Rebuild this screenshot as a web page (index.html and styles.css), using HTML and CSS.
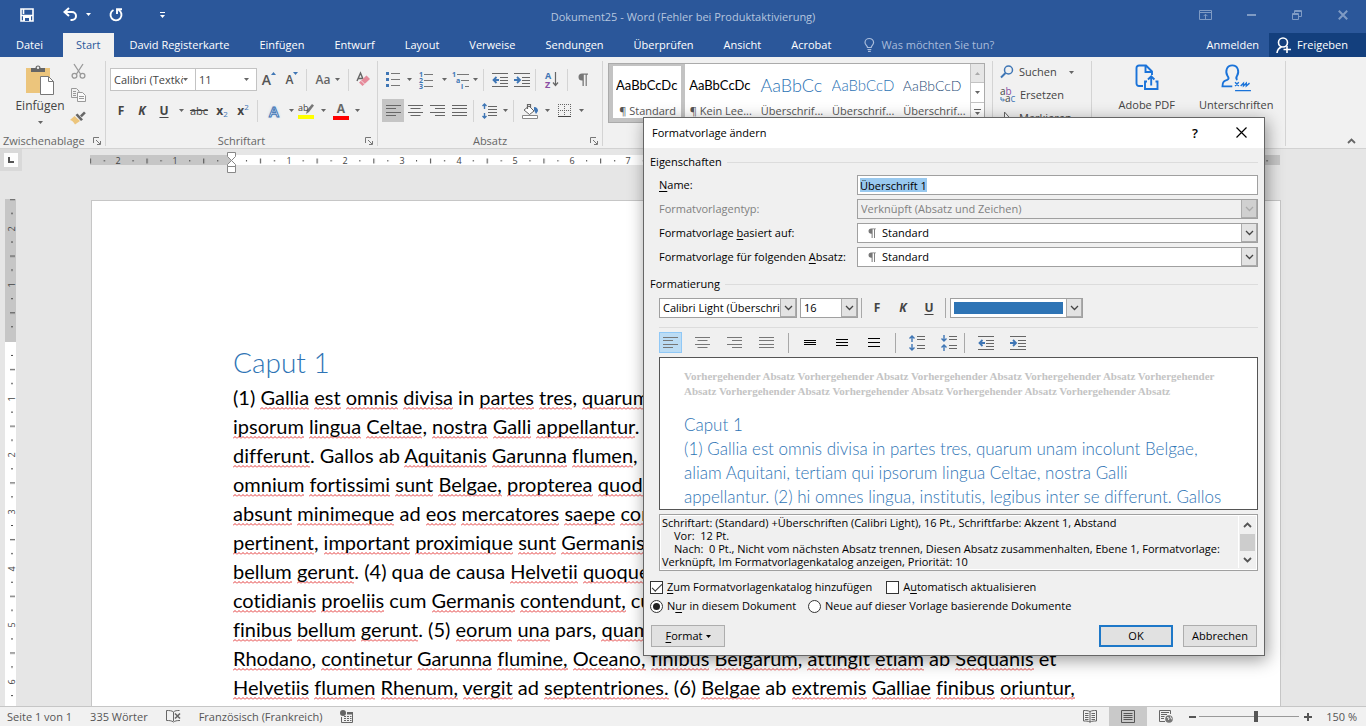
FILE: index.html
```html
<!DOCTYPE html>
<html lang="de">
<head>
<meta charset="utf-8">
<title>Dokument25 - Word</title>
<link rel="stylesheet" href="styles.css">
</head>
<body>
<svg class="defs" aria-hidden="true">
  <symbol id="caret" viewBox="0 0 5 3"><path d="M0 0h5L2.500 3z" fill="currentColor"/></symbol>
  <symbol id="chev" viewBox="0 0 9 6"><path d="M1 1l3.500 3.500L8 1" fill="none" stroke="currentColor" stroke-width="1.300"/></symbol>
  <symbol id="launch" viewBox="0 0 8 8"><path d="M.5 6V.5H6M3 3l4 4M7.500 4v3.500H4" fill="none" stroke="#777"/></symbol>
  <symbol id="left" viewBox="0 0 15 11"><path d="M0 .5h15M0 3.500h10M0 7.500h15M0 10.500h10" stroke="currentColor"/></symbol>
  <symbol id="center" viewBox="0 0 15 11"><path d="M0 .5h15M2.500 3.500h10M0 7.500h15M2.500 10.500h10" stroke="currentColor"/></symbol>
  <symbol id="right" viewBox="0 0 15 11"><path d="M0 .5h15M5 3.500h10M0 7.500h15M5 10.500h10" stroke="currentColor"/></symbol>
  <symbol id="just" viewBox="0 0 15 11"><path d="M0 .5h15M0 3.500h15M0 7.500h15M0 10.500h15" stroke="currentColor"/></symbol>
  <symbol id="outdent" viewBox="0 0 17 14"><path d="M0 .5h16M8 4.500h8M8 7.500h8M8 10.500h8M0 13.500h16" stroke="#666"/><path d="M7 7H2M4.500 4L1.500 7l3 3" fill="none" stroke="#3f76b5" stroke-width="1.800"/></symbol>
  <symbol id="indent" viewBox="0 0 17 14"><path d="M0 .5h16M8 4.500h8M8 7.500h8M8 10.500h8M0 13.500h16" stroke="#666"/><path d="M0 7h5.500M3 4l3 3-3 3" fill="none" stroke="#3f76b5" stroke-width="1.800"/></symbol>
  <symbol id="pilcrow" viewBox="0 0 10 13"><path d="M4.500 7.500H4A3.500 3.500 0 0 1 4 .5h6v1.200H8.800V13H7.600V1.700H5.800V13H4.500z" fill="currentColor"/></symbol>
</svg>

<div class="app">
  <header class="titlebar">
    <div class="quick">
      <button class="q-save" aria-label="Speichern"><svg width="14" height="14" viewBox="0 0 14 14"><path d="M1 1h12v12H1zM1 7.500h12M3.500 1v5" fill="none" stroke="#fff" stroke-width="1.600"/><path d="M3 8h8v5H3z" fill="#fff"/><path d="M5 10h4v3H5z" fill="#2b579a"/></svg></button>
      <button class="q-undo" aria-label="Rückgängig"><svg width="15" height="13" viewBox="0 0 15 13"><path d="M6 0L1.500 4 6 8M2 4h7a4 4 0 0 1 0 8H7.500" fill="none" stroke="#fff" stroke-width="2"/></svg></button>
      <button class="q-caret" aria-label="Rückgängig-Liste"><svg width="5" height="3"><use href="#caret"/></svg></button>
      <button class="q-redo" aria-label="Wiederholen"><svg width="14" height="14" viewBox="0 0 14 14"><path d="M4.500 2A5.500 5.500 0 1 0 9.500 2M8 6V1.200h5" fill="none" stroke="#fff" stroke-width="1.900"/></svg></button>
      <button class="q-more" aria-label="Anpassen"><svg width="5" height="6" viewBox="0 0 5 6"><path d="M0 .5h5" stroke="#fff"/><path d="M0 3h5L2.500 6z" fill="#fff"/></svg></button>
    </div>
    <div class="apptitle">Dokument25 - Word (Fehler bei Produktaktivierung)</div>
    <div class="winbtns">
      <button aria-label="Menüband-Anzeigeoptionen"><svg width="13" height="10" viewBox="0 0 13 10"><path d="M.5.5h12v9H.5zM.5 2.500h12M6.500 9V4.500M4.500 6.200l2-2 2 2" fill="none" stroke="currentColor"/></svg></button>
      <button aria-label="Minimieren"><svg width="9" height="2" viewBox="0 0 9 2"><path d="M0 1h9" stroke="currentColor" stroke-width="2"/></svg></button>
      <button aria-label="Wiederherstellen"><svg width="10" height="10" viewBox="0 0 10 10"><path d="M.5 3.500h6v6h-6zM.5 4.500h6M2.500 3V.5h7v6H7M2.500 1.500h7" fill="none" stroke="currentColor"/></svg></button>
      <button aria-label="Schließen"><svg width="10" height="10" viewBox="0 0 10 10"><path d="M.8.8l8.400 8.400M9.200.8L.8 9.200" stroke="currentColor" stroke-width="2"/></svg></button>
    </div>
  </header>

  <nav class="tabs">
    <button class="tab">Datei</button><button class="tab active">Start</button><button class="tab">David Registerkarte</button><button class="tab">Einfügen</button><button class="tab">Entwurf</button><button class="tab">Layout</button><button class="tab">Verweise</button><button class="tab">Sendungen</button><button class="tab">Überprüfen</button><button class="tab">Ansicht</button><button class="tab">Acrobat</button>
    <button class="tab tell"><svg width="11" height="14" viewBox="0 0 11 14"><path d="M3.500 9.500C3.500 7.500 1 7 1 4.500a4.300 4 0 0 1 8.600 0C9.600 7 7.200 7.500 7.200 9.500zM3.500 11.500h3.800M4 13.400h2.800" fill="none" stroke="currentColor" stroke-width="1.200"/></svg>Was möchten Sie tun?</button>
    <button class="login">Anmelden</button>
    <button class="share"><svg width="16" height="17" viewBox="0 0 16 17"><circle cx="7" cy="5.500" r="4.500" fill="none" stroke="#fff" stroke-width="1.600"/><path d="M1 16c.3-3 2-5 4.500-6M11 9v7M7.500 12.500h7.500" fill="none" stroke="#fff" stroke-width="1.600"/></svg>Freigeben</button>
  </nav>

  <section class="ribbon">
    <div class="group g-clip">
      <div class="gbody clip">
        <button class="big"><svg width="28" height="30" viewBox="0 0 28 30"><path d="M0 3h24v25H0z" fill="#ecc57c"/><path d="M5 7V3h4.500a2.500 2.500 0 0 1 5 0H19v4z" fill="#666"/><circle cx="12" cy="2.800" r="1.200" fill="#eee"/><path d="M14.500 11.500h8l5 5v13h-13z" fill="#fff" stroke="#777"/><path d="M22.500 11.500v5h5" fill="none" stroke="#777"/></svg><span>Einfügen</span><svg class="dn" width="5" height="3"><use href="#caret"/></svg></button>
        <div class="clipcol">
          <button aria-label="Ausschneiden"><svg width="15" height="15" viewBox="0 0 15 15"><path d="M3 0l6.500 10M12 0L5.500 10" stroke="#999" stroke-width="1.300"/><circle cx="3.500" cy="11.800" r="2.400" fill="none" stroke="#999" stroke-width="1.300"/><circle cx="11.500" cy="11.800" r="2.400" fill="none" stroke="#999" stroke-width="1.300"/></svg></button>
          <button aria-label="Kopieren"><svg width="15" height="14" viewBox="0 0 15 14"><path d="M.5.500h5l2.500 2.500v6.500H.5z" fill="#f1f1f1" stroke="#999"/><path d="M6.500 4.500h5l3 3v6h-8z" fill="#fafafa" stroke="#999"/><path d="M2 3.500h3M2 5.500h3M2 7.500h3M8 8.500h5M8 10.500h5" stroke="#999"/></svg></button>
          <button aria-label="Format übertragen"><svg width="16" height="14" viewBox="0 0 16 14"><path d="M10 4.500L14 .5l1.800 1.800-4 4z" fill="#666"/><path d="M5.500 4l2-1.500 5.500 6-2 1.500z" fill="#666"/><path d="M4.500 5L0 9c2 .5 3 1.500 5 4.500l5-3.500z" fill="#ecc57c"/></svg></button>
        </div>
      </div>
      <div class="glabel">Zwischenablage<button aria-label="Dialog Zwischenablage"><svg width="8" height="8"><use href="#launch"/></svg></button></div>
    </div>

    <div class="group g-font">
      <div class="gbody rows">
        <div class="row">
          <div class="rcombo c-name"><select aria-label="Schriftart"><option>Calibri (Textkörper)</option></select><svg width="5" height="3"><use href="#caret"/></svg></div>
          <div class="rcombo c-size"><select aria-label="Schriftgrad"><option>11</option></select><svg width="5" height="3"><use href="#caret"/></svg></div>
          <button class="b24" aria-label="Schrift vergrößern"><span class="gA">A</span><svg class="tri" width="5" height="3" viewBox="0 0 5 3"><path d="M0 3h5L2.500 0z" fill="#3f76b5"/></svg></button>
          <button class="b22" aria-label="Schrift verkleinern"><span class="gA sm">A</span><svg class="tri" width="5" height="3" viewBox="0 0 5 3"><path d="M0 0h5L2.500 3z" fill="#3f76b5"/></svg></button>
          <i class="sep"></i>
          <button class="b34 aa">Aa <svg width="5" height="3"><use href="#caret"/></svg></button>
          <i class="sep"></i>
          <button class="b20" aria-label="Formatierung löschen"><svg width="15" height="15" viewBox="0 0 15 15"><path d="M1 9L4.500 1 7 7M2 6.500h4" fill="none" stroke="#666" stroke-width="1.400"/><path d="M3 10.500l7.500-7 3.500 3.500-7.500 7z" fill="#e58a9a"/><path d="M5 8.500l3.600 3.600" stroke="#f6dfe3"/></svg></button>
        </div>
        <div class="row">
          <button class="b22 ch"><b>F</b></button><button class="b20 ch"><b><em>K</em></b></button><button class="b24 ch"><b class="ul">U</b></button><button class="b10" aria-label="Unterstreichungsart"><svg width="5" height="3"><use href="#caret"/></svg></button>
          <button class="b26 strike">abc</button><button class="b20 ch x"><b>x</b><span class="lo">2</span></button><button class="b22 ch x"><b>x</b><span class="hi">2</span></button><i class="sep"></i>
          <button class="b24 fx">A</button><button class="b10" aria-label="Texteffekte"><svg width="5" height="3"><use href="#caret"/></svg></button>
          <button class="b20" aria-label="Texthervorhebung"><svg width="16" height="17" viewBox="0 0 16 17"><path d="M0 13h16v4H0z" fill="#ff0"/><path d="M9 8l5-6 2 1.500-5 6.500-3 2z" fill="#777"/><text x="0" y="9" class="hl">ab</text></svg></button><button class="b14" aria-label="Hervorhebungsfarbe"><svg width="5" height="3"><use href="#caret"/></svg></button>
          <button class="b22 fc"><b>A</b></button><button class="b10" aria-label="Schriftfarbe"><svg width="5" height="3"><use href="#caret"/></svg></button>
        </div>
      </div>
      <div class="glabel">Schriftart<button aria-label="Dialog Schriftart"><svg width="8" height="8"><use href="#launch"/></svg></button></div>
    </div>

    <div class="group g-para">
      <div class="gbody rows">
        <div class="row">
          <button class="b22" aria-label="Aufzählung"><svg width="14" height="15" viewBox="0 0 14 15"><path d="M5 1.500h9M5 7.500h9M5 13.500h9" stroke="#777"/><path d="M0 0h3v3H0zM0 6h3v3H0zM0 12h3v3H0z" fill="#3f76b5"/></svg></button><button class="b10" aria-label="Aufzählungszeichen"><svg width="5" height="3"><use href="#caret"/></svg></button>
          <button class="b24" aria-label="Nummerierung"><svg width="14" height="16" viewBox="0 0 14 16"><path d="M5 2.500h9M5 8.500h9M5 14.500h9" stroke="#777"/><g class="num"><text x="0" y="5">1</text><text x="0" y="11">2</text><text x="0" y="17">3</text></g></svg></button><button class="b12" aria-label="Nummerierungsformat"><svg width="5" height="3"><use href="#caret"/></svg></button>
          <button class="b20" aria-label="Liste mit mehreren Ebenen"><svg width="17" height="16" viewBox="0 0 17 16"><path d="M5 2.500h12M9 8.500h8M13 14.500h4" stroke="#777"/><g class="num"><text x="0" y="5">1</text><text x="4" y="11">a</text><text x="9" y="17">i</text></g></svg></button><button class="b10" aria-label="Ebenenformat"><svg width="5" height="3"><use href="#caret"/></svg></button>
          <i class="sep"></i>
          <button class="b24" aria-label="Einzug verkleinern"><svg width="17" height="14"><use href="#outdent"/></svg></button><button class="b20" aria-label="Einzug vergrößern"><svg width="17" height="14"><use href="#indent"/></svg></button><i class="sep"></i>
          <button class="b24" aria-label="Sortieren"><svg width="14" height="17" viewBox="0 0 14 17"><text x="0" y="8" class="srt">A</text><text x="0" y="17" class="srt z">Z</text><path d="M10.500 1v13M8 11.500l2.500 3 2.500-3" fill="none" stroke="#666" stroke-width="1.200"/></svg></button><i class="sep"></i>
          <button class="b22" aria-label="Absatzmarken"><svg class="gray" width="10" height="13"><use href="#pilcrow"/></svg></button>
        </div>
        <div class="row">
          <button class="b22 on" aria-label="Linksbündig"><svg width="15" height="11"><use href="#left"/></svg></button><button class="b22" aria-label="Zentriert"><svg width="15" height="11"><use href="#center"/></svg></button><button class="b22" aria-label="Rechtsbündig"><svg width="15" height="11"><use href="#right"/></svg></button><button class="b22" aria-label="Blocksatz"><svg width="15" height="11"><use href="#just"/></svg></button><i class="sep"></i>
          <button class="b22" aria-label="Zeilenabstand"><svg width="15" height="16" viewBox="0 0 15 16"><path d="M6 3.500h9M6 6.500h9M6 9.500h9M6 12.500h9" stroke="#666"/><path d="M2.500 1v5M.5 3l2-2 2 2M2.500 15v-5M.5 13l2 2 2-2" fill="none" stroke="#3f76b5" stroke-width="1.400"/></svg></button><button class="b10" aria-label="Abstandsoptionen"><svg width="5" height="3"><use href="#caret"/></svg></button><i class="sep"></i>
          <button class="b24" aria-label="Schattierung"><svg width="17" height="16" viewBox="0 0 17 16"><path d="M.5 12.500h15v3H.5z" fill="#fff" stroke="#888"/><path d="M7 3l5 5-4.500 3.500L2 7z" fill="#fff" stroke="#666"/><path d="M5.500 6V1.500h3V5" fill="none" stroke="#666" stroke-width="1.200"/><path d="M12 4c3 0 4 2 4 4l-2 3-2-4z" fill="#3f76b5"/></svg></button><button class="b10" aria-label="Schattierungsfarbe"><svg width="5" height="3"><use href="#caret"/></svg></button>
          <button class="b24" aria-label="Rahmen"><svg width="13" height="13" viewBox="0 0 13 13"><path d="M.5 0v12M6.500 0v12M12.500 0v12M0 .5h13M0 6.500h13" stroke="#666" stroke-dasharray="1 1"/><path d="M0 12.500h13" stroke="#444"/></svg></button><button class="b10" aria-label="Rahmenlinien"><svg width="5" height="3"><use href="#caret"/></svg></button>
        </div>
      </div>
      <div class="glabel">Absatz<button aria-label="Dialog Absatz"><svg width="8" height="8"><use href="#launch"/></svg></button></div>
    </div>

    <div class="group g-styles">
      <div class="gallery">
        <button class="style sel"><span class="smp">AaBbCcDc</span><span class="nm">¶ Standard</span></button>
        <button class="style"><span class="smp">AaBbCcDc</span><span class="nm">¶ Kein Lee...</span></button>
        <button class="style"><span class="smp h1s">AaBbCc</span><span class="nm">Überschrif...</span></button>
        <button class="style"><span class="smp h2s">AaBbCcD</span><span class="nm">Überschrif...</span></button>
        <button class="style"><span class="smp h3s">AaBbCcD</span><span class="nm">Überschrif...</span></button>
        <div class="gscroll">
          <button class="off" aria-label="Nach oben"><svg width="5" height="3" viewBox="0 0 5 3"><path d="M0 3h5L2.500 0z" fill="#aaa"/></svg></button>
          <button aria-label="Nach unten"><svg width="5" height="3"><use href="#caret"/></svg></button>
          <button aria-label="Weitere"><svg width="7" height="6" viewBox="0 0 7 6"><path d="M0 .5h7" stroke="#666"/><path d="M1 3h5L3.500 6z" fill="#666"/></svg></button>
        </div>
      </div>
    </div>

    <div class="group g-edit">
      <button><svg width="15" height="14" viewBox="0 0 15 14"><circle cx="8.500" cy="5" r="4" fill="none" stroke="#3f76b5" stroke-width="1.500"/><path d="M5.500 8L1 12.500" stroke="#3f76b5" stroke-width="2"/></svg>Suchen<svg class="far" width="5" height="3"><use href="#caret"/></svg></button>
      <button><svg width="16" height="15" viewBox="0 0 16 15"><g class="rep"><text x="0" y="7">a<tspan fill="#8a4fa3">b</tspan></text><text x="5" y="14">a<tspan fill="#3f76b5">c</tspan></text></g><path d="M1 9v3h3M3 10.500L4.500 12 3 13.500" fill="none" stroke="#3f76b5"/></svg>Ersetzen</button>
      <button><svg width="15" height="14" viewBox="0 0 15 14"><path d="M4.500 1v11l3-3 4 0z" fill="#fff" stroke="#666"/></svg>Markieren<svg class="near" width="5" height="3"><use href="#caret"/></svg></button>
    </div>

    <div class="group g-adobe">
      <button><svg width="24" height="28" viewBox="0 0 24 28"><path d="M8 22H4a2.500 2.500 0 0 1-2.500-2.500V4A2.500 2.500 0 0 1 4 1.500h7l6 6V11M10.500 2v6H17M12 17.500h-2V25h12.500v-7.500h-2M16.200 21.500V12.500M13 15.500l3.200-3.200 3.200 3.200" fill="none" stroke="#1a73d9" stroke-width="1.900"/></svg><span>Adobe PDF<br>erstellen und teilen</span></button>
      <button><svg width="32" height="30" viewBox="0 0 32 30"><path d="M12 24H1.500c0-5 2-6 5-7 2-1 2-2 .5-4C4 8 6 1.500 12 1.500S20 8 17 13c-1.300 2-1 3 .5 4" fill="none" stroke="#1a73d9" stroke-width="2"/><path d="M15 19.500l4 4M19 19.500l-4 4M21 23.500l3-3v3l3-3v3l3.500-3M15 28.500h17" fill="none" stroke="#1a73d9" stroke-width="1.500"/></svg><span>Unterschriften<br>anfordern</span></button>
    </div>
    <button class="collapse" aria-label="Menüband reduzieren"><svg width="9" height="6" viewBox="0 0 9 6"><path d="M1 5l3.500-3.500L8 5" fill="none" stroke="#666" stroke-width="1.800"/></svg></button>
  </section>

  <main class="work">
    <div class="hrow">
      <button class="tabstop" aria-label="Tabstopp"><svg width="6" height="6" viewBox="0 0 6 6"><path d="M1 0v5h5" fill="none" stroke="#555" stroke-width="2"/></svg></button>
      <svg class="hruler" height="24" viewBox="0 0 1190 24" preserveAspectRatio="xMinYMin slice">
        <defs>
          <pattern id="hp" x="142" y="0" width="56.700" height="24" patternUnits="userSpaceOnUse"><path d="M14.500 11v1.500M42.500 11v1.500M28.500 9.500v5" stroke="#444"/></pattern>
        </defs>
        <path d="M0 6h1190v10H0z" fill="#c6c6c6"/><path d="M142 6h906v10H142z" fill="#fff"/><path d="M0 0h1190v24H0z" fill="url(#hp)"/>
        <g class="rnum"><text x="28" y="15">2</text><text x="85" y="15">1</text><text x="199" y="15">1</text><text x="255" y="15">2</text><text x="312" y="15">3</text><text x="369" y="15">4</text><text x="425" y="15">5</text><text x="482" y="15">6</text><text x="538" y="15">7</text></g>
        <path d="M137.500 3.500h8v4l-4 4-4-4zM137.500 17.500v-2l4-4 4 4v2zM137.500 17.500h8v6h-8z" fill="#fff" stroke="#888"/>
      </svg>
    </div>
    <div class="canvas">
      <svg class="vruler" width="11" viewBox="0 0 11 527" preserveAspectRatio="xMinYMin slice">
        <defs><pattern id="vp" x="0" y="143" width="11" height="56.700" patternUnits="userSpaceOnUse"><path d="M6 13.500h2M6 41.500h2M5 27.500h5" stroke="#444"/></pattern></defs>
        <path d="M0 0h11v143H0z" fill="#c6c6c6"/><path d="M0 143h11v384H0z" fill="#fff"/><path d="M0 0h11v527H0z" fill="url(#vp)"/>
        <g class="rnum" transform="rotate(-90)"><text x="-30" y="10">2</text><text x="-86" y="10">1</text><text x="-200" y="10">1</text><text x="-256" y="10">2</text><text x="-313" y="10">3</text><text x="-370" y="10">4</text><text x="-426" y="10">5</text><text x="-483" y="10">6</text></g>
      </svg>
      <article class="page">
        <h1>Caput 1</h1>
        <p>(1) <u>Gallia</u> <u>est</u> <u>omnis</u> <u>divisa</u> in <u>partes</u> <u>tres</u>, <u>quarum</u> <u>unam</u> <u>incolunt</u> Belgae, aliam Aquitani,<br>
        <u>ipsorum</u> <u>lingua</u> <u>Celtae</u>, <u>nostra</u> <u>Galli</u> <u>appellantur</u>. (2) hi omnes lingua, institutis, legibus inter se<br>
        <u>differunt</u>. Gallos ab <u>Aquitanis</u> <u>Garunna</u> <u>flumen</u>, a Belgis Matrona et Sequana dividit. (3) horum<br>
        <u>omnium</u> <u>fortissimi</u> <u>sunt</u> <u>Belgae,</u> <u>propterea</u> <u>quod</u> a cultu atque humanitate provinciae<br>
        <u>absunt</u> <u>minimeque</u> ad <u>eos</u> <u>mercatores</u> <u>saepe</u> <u>commeant</u> atque ea, quae ad effeminandos<br>
        <u>pertinent</u>, <u>important</u> <u>proximique</u> <u>sunt</u> <u>Germanis</u>, qui trans Rhenum incolunt, quibuscum<br>
        <u>bellum</u> <u>gerunt</u>. (4) qua de causa <u>Helvetii</u> <u>quoque</u> reliquos Gallos virtute praecedunt, quod<br>
        <u>cotidianis</u> <u>proeliis</u> cum <u>Germanis</u> <u>contendunt,</u> cum aut suis finibus eos prohibent<br>
        <u>finibus</u> <u>bellum</u> <u>gerunt</u>. (5) <u>eorum</u> <u>una</u> pars, <u>quam</u> Gallos obtinere dictum est, initium<br>
        <u>Rhodano</u>, <u>continetur</u> <u>Garunna</u> <u>flumine,</u> <u>Oceano,</u> <u>finibus</u> <u>Belgarum</u>, <u>attingit</u> <u>etiam</u> ab <u>Sequanis</u> et<br>
        <u>Helvetiis</u> <u>flumen</u> <u>Rhenum,</u> <u>vergit</u> ad <u>septentriones.</u> (6) <u>Belgae</u> ab <u>extremis</u> <u>Galliae</u> <u>finibus</u> <u>oriuntur,</u></p>
      </article>
    </div>
  </main>

  <footer class="status">
    <span>Seite 1 von 1</span><span>335 Wörter</span>
    <button aria-label="Rechtschreibung"><svg width="15" height="13" viewBox="0 0 15 13"><path d="M7.500 2v9M7.500 2C6 .5 3 .5.5.5v10c2.500 0 5 0 7 1.500 1.500-1 3-1.500 6.500-1.500M7.500 2C9 .5 11 .5 13.500.5" fill="none" stroke="#666"/><path d="M9 3.500l5 5M14 3.500l-5 5" stroke="#666" stroke-width="1.600"/></svg></button>
    <span>Französisch (Frankreich)</span>
    <button aria-label="Makro"><svg width="13" height="13" viewBox="0 0 13 13"><circle cx="3" cy="3" r="3" fill="#666"/><path d="M7 2.500h5.500v10h-11V7" fill="none" stroke="#666"/><path d="M7 2h6v2.500H7z" fill="#666"/><path d="M4 6.500h2M7 6.500h2M10 6.500h1.500M4 8.500h2M7 8.500h2M10 8.500h1.500M4 10.500h2M7 10.500h2M10 10.500h1.500" stroke="#666"/></svg></button>
    <div class="views">
      <button aria-label="Lesemodus"><svg width="14" height="13" viewBox="0 0 14 13"><path d="M7 1.500v11M7 1.500C5 .5 3 .5.500.5v10.500c2.500 0 4.500 0 6.500 1 2-1 4-1 6.500-1V.5C11 .5 9 .5 7 1.500M2 3.500h3.500M2 5.500h3.500M2 7.500h3.500M2 9.500h3.500M8.500 3.500H12M8.500 5.500H12M8.500 7.500H12M8.500 9.500H12" fill="none" stroke="#666"/></svg></button>
      <button class="on" aria-label="Seitenlayout"><svg width="14" height="13" viewBox="0 0 14 13"><path d="M.5.5h13v12H.5zM2.500 3.500h9M2.500 5.500h9M2.500 7.500h9M2.500 9.500h9" fill="none" stroke="#555"/></svg></button>
      <button aria-label="Weblayout"><svg width="14" height="13" viewBox="0 0 14 13"><path d="M6 11.500H.5V.5h11V4M2 2.500h8M2 4.500h6M2 6.500h3.500M2 8.500h3" fill="none" stroke="#666"/><circle cx="10" cy="9" r="3.800" fill="#777"/><path d="M8 7.500l2 .5-.5 2M11.500 6.500l.5 2 1 .5" fill="none" stroke="#eee"/></svg></button>
    </div>
    <button class="zminus" aria-label="Verkleinern"><svg width="7" height="8" viewBox="0 0 7 8"><path d="M0 4h7" stroke="#555" stroke-width="2"/></svg></button>
    <input class="zoom" type="range" aria-label="Zoom" min="0" max="100" value="57">
    <button class="zplus" aria-label="Vergrößern"><svg width="8" height="8" viewBox="0 0 8 8"><path d="M0 4h8M4 0v8" stroke="#555" stroke-width="2"/></svg></button>
    <span class="pct">150 %</span>
  </footer>
</div>

<form class="dialog" role="dialog" aria-labelledby="dlgt">
  <div class="dtitle"><span id="dlgt">Formatvorlage ändern</span><button type="button" class="help" aria-label="Hilfe">?</button><button type="button" aria-label="Schließen"><svg width="11" height="11" viewBox="0 0 11 11"><path d="M.5.5l10 10M10.500.5l-10 10" stroke="#000" stroke-width="1.200"/></svg></button></div>
  <div class="dbody">
    <h2 class="first">Eigenschaften</h2>
    <div class="fields">
      <label for="nm"><span class="k">N</span>ame:</label><div class="field"><input id="nm" type="text" value="Überschrift 1"></div>
      <label for="ty" class="dis">Formatvorlagentyp:</label><div class="field combo dis"><select id="ty" disabled><option>Verknüpft (Absatz und Zeichen)</option></select><span class="arr"><svg width="9" height="6"><use href="#chev"/></svg></span></div>
      <label for="ba">Formatvorlage <span class="k">b</span>asiert auf:</label><div class="field combo pil"><select id="ba"><option>Standard</option></select><svg class="p" width="8" height="10"><use href="#pilcrow"/></svg><span class="arr"><svg width="9" height="6"><use href="#chev"/></svg></span></div>
      <label for="fo">Formatvorlage für folgenden <span class="k">A</span>bsatz:</label><div class="field combo pil"><select id="fo"><option>Standard</option></select><svg class="p" width="8" height="10"><use href="#pilcrow"/></svg><span class="arr"><svg width="9" height="6"><use href="#chev"/></svg></span></div>
    </div>
    <h2>Formatierung</h2>
    <div class="fmt">
      <div class="field combo f-name"><select aria-label="Schriftart"><option>Calibri Light (Überschriften)</option></select><span class="arr"><svg width="9" height="6"><use href="#chev"/></svg></span></div>
      <div class="field combo f-size"><select aria-label="Größe"><option>16</option></select><span class="arr"><svg width="9" height="6"><use href="#chev"/></svg></span></div>
      <i class="dsep"></i>
      <button type="button" class="b26 ch"><b>F</b></button><button type="button" class="b26 ch"><b><em>K</em></b></button><button type="button" class="b26 ch"><b class="ul">U</b></button>
      <i class="dsep"></i>
      <div class="field combo f-col"><select aria-label="Farbe"><option></option></select><span class="swatch"></span><span class="arr"><svg width="9" height="6"><use href="#chev"/></svg></span></div>
    </div>
    <div class="para">
      <button type="button" class="on" aria-label="Links"><svg width="15" height="11"><use href="#left"/></svg></button><button type="button" aria-label="Zentriert"><svg width="15" height="11"><use href="#center"/></svg></button><button type="button" aria-label="Rechts"><svg width="15" height="11"><use href="#right"/></svg></button><button type="button" aria-label="Blocksatz"><svg width="15" height="11"><use href="#just"/></svg></button>
      <i class="dsep"></i>
      <button type="button" aria-label="Einfach"><svg width="12" height="7" viewBox="0 0 12 7"><path d="M0 1.500h12M0 3.500h12M0 5.500h12" stroke="#000"/></svg></button><button type="button" aria-label="1,5 Zeilen"><svg width="12" height="9" viewBox="0 0 12 9"><path d="M0 1.500h12M0 4.500h12M0 7.500h12" stroke="#000"/></svg></button><button type="button" aria-label="Doppelt"><svg width="12" height="11" viewBox="0 0 12 11"><path d="M0 1.500h12M0 5.500h12M0 9.500h12" stroke="#000"/></svg></button>
      <i class="dsep"></i>
      <button type="button" aria-label="Abstand vergrößern"><svg width="16" height="16" viewBox="0 0 16 16"><path d="M8 1.500h8M8 4.500h8M8 10.500h8M8 13.500h8" stroke="#666"/><path d="M3 7V1M.5 3.500L3 1l2.500 2.500M3 9v6M.5 12.500L3 15l2.500-2.500" fill="none" stroke="#3f76b5" stroke-width="1.400"/></svg></button><button type="button" aria-label="Abstand verkleinern"><svg width="16" height="16" viewBox="0 0 16 16"><path d="M8 1.500h8M8 4.500h8M8 10.500h8M8 13.500h8" stroke="#666"/><path d="M3 0v6M.5 3.500L3 6l2.500-2.500M3 16v-6M.5 12.500L3 10l2.500 2.500" fill="none" stroke="#3f76b5" stroke-width="1.400"/></svg></button>
      <i class="dsep tight"></i>
      <button type="button" aria-label="Einzug verkleinern"><svg width="17" height="14"><use href="#outdent"/></svg></button><button type="button" aria-label="Einzug vergrößern"><svg width="17" height="14"><use href="#indent"/></svg></button>
    </div>
    <div class="preview">
      <p class="prev">Vorhergehender Absatz Vorhergehender Absatz Vorhergehender Absatz Vorhergehender Absatz Vorhergehender<br>Absatz Vorhergehender Absatz Vorhergehender Absatz Vorhergehender Absatz Vorhergehender Absatz</p>
      <p class="cur">Caput 1<br>(1) Gallia est omnis divisa in partes tres, quarum unam incolunt Belgae,<br>aliam Aquitani, tertiam qui ipsorum lingua Celtae, nostra Galli<br>appellantur. (2) hi omnes lingua, institutis, legibus inter se differunt. Gallos</p>
    </div>
    <div class="desc">
      <p>Schriftart: (Standard) +Überschriften (Calibri Light), 16 Pt., Schriftfarbe: Akzent 1, Abstand<br><span class="in">Vor:&nbsp; 12 Pt.</span><br><span class="in">Nach:&nbsp; 0 Pt., Nicht vom nächsten Absatz trennen, Diesen Absatz zusammenhalten, Ebene 1, Formatvorlage:</span><br>Verknüpft, Im Formatvorlagenkatalog anzeigen, Priorität: 10</p>
      <div class="sbar"><svg width="9" height="6" viewBox="0 0 9 6"><path d="M1 5l3.500-3.500L8 5" fill="none" stroke="#555" stroke-width="1.800"/></svg><span class="thumb"></span><svg width="9" height="6" viewBox="0 0 9 6"><path d="M1 1l3.500 3.500L8 1" fill="none" stroke="#555" stroke-width="1.800"/></svg></div>
    </div>
    <div class="checks">
      <label><input type="checkbox" checked><span><span class="k">Z</span>um Formatvorlagenkatalog hinzufügen</span></label>
      <label><input type="checkbox"><span>A<span class="k">u</span>tomatisch aktualisieren</span></label>
    </div>
    <div class="checks radios">
      <label><input type="radio" name="scope" checked><span>N<span class="k">u</span>r in diesem Dokument</span></label>
      <label><input type="radio" name="scope"><span>Neue auf dieser Vorlage basierende Dokumente</span></label>
    </div>
    <div class="actions">
      <button type="button"><span><span class="k">F</span>ormat</span><svg width="5" height="3"><use href="#caret"/></svg></button>
      <button type="button" class="ok">OK</button>
      <button type="button">Abbrechen</button>
    </div>
  </div>
</form>
</body>
</html>
```
FILE: styles.css
```css
* { box-sizing: border-box; }
html, body { height: 100%; }
body {
  margin: 0;
  overflow: hidden;
  font: 11px/16px "Open Sans", "Noto Sans", sans-serif;
  color: #444;
}
button {
  display: inline-flex;
  align-items: center;
  justify-content: center;
  flex: none;
  margin: 0;
  padding: 0;
  border: 0;
  background: none;
  font: inherit;
  color: inherit;
}
select, input { font: inherit; color: inherit; margin: 0; }
svg { display: block; flex: none; }
button svg { overflow: visible; }
h1, h2, p { margin: 0; font-weight: 400; }
.defs { position: absolute; width: 0; height: 0; }
.app { display: flex; flex-direction: column; height: 100vh; }

/* Title bar */
.titlebar {
  display: grid;
  grid-template-columns: 1fr auto 1fr;
  align-items: center;
  height: 33px;
  flex: none;
  background: #2b579a;
  color: #fff;
}
.quick { display: flex; align-items: center; padding: 0 0 4px 17px; }
.q-save { width: 20px; }
.q-undo { width: 20px; margin-left: 23px; }
.q-caret { width: 14px; margin-left: 1px; }
.q-redo { width: 20px; margin-left: 11px; }
.q-more { width: 12px; margin-left: 30px; }
.apptitle { color: #b6c6df; }
.winbtns { display: flex; justify-content: flex-end; color: #7f9bc4; padding-bottom: 3px; }
.winbtns button { width: 46px; height: 26px; }

/* Tabs */
.tabs { display: flex; height: 24px; flex: none; background: #2b579a; color: #fff; padding-left: 1px; }
.tab { padding: 0 15px; }
.tab:first-child { padding-right: 20px; }
.tab.active { background: #f1f1f1; color: #2b579a; padding: 0 14px 0 13px; }
.tab.tell { color: #a9bcdb; gap: 6px; padding-left: 18px; }
.login { margin-left: auto; padding: 0 10px; }
.share { background: #133f7d; gap: 5px; padding: 0 18px 0 7px; }

/* Ribbon */
.ribbon { display: flex; height: 92px; flex: none; background: #f1f1f1; border-bottom: 1px solid #d2d2d2; }
.group { flex: none; display: flex; flex-direction: column; margin: 4px 0 2px; border-right: 1px solid #d4d4d4; color: #444; }
.g-clip { width: 106px; }
.g-font { width: 272px; }
.g-para { width: 225px; }
.g-styles { width: 390px; }
.g-edit { width: 99px; }
.g-adobe { width: 194px; }
.gbody { flex: 1; }
.glabel { display: flex; align-items: center; justify-content: center; height: 11px; line-height: 11px; color: #666; }
.glabel button { margin-left: auto; width: 16px; height: 11px; }
.g-clip .glabel { padding-left: 3px; }
.g-font .glabel::before, .g-para .glabel::before { content: ""; width: 16px; margin-right: auto; }
.clip { display: flex; }
.big { flex-direction: column; justify-content: flex-start; width: 68px; padding: 4px 0 0 12px; line-height: 14px; }
.big span { margin-top: 4px; font-size: 12px; }
.dn { margin-top: 8px; color: #666; }
.clipcol { display: flex; flex-direction: column; gap: 8px; padding-top: 3px; }
.clipcol button { width: 20px; height: 15px; }
.rows { display: flex; flex-direction: column; gap: 8px; padding: 7px 0 0 4px; }
.row { display: flex; align-items: center; height: 23px; color: #666; }
.row button { height: 23px; }
.b10 { width: 10px; } .b12 { width: 12px; } .b14 { width: 14px; } .b20 { width: 20px; }
.b22 { width: 22px; } .b24 { width: 24px; } .b26 { width: 26px; } .b34 { width: 34px; }
.sep { width: 1px; height: 22px; background: #d4d4d4; margin: 0 4px 0 3px; flex: none; }
.rcombo { display: grid; grid-template-columns: 1fr 12px; align-items: center; height: 23px; border: 1px solid #c3c3c3; background: #fff; }
.c-name { width: 86px; }
.c-size { width: 61px; border-left: 0; }
.rcombo select { appearance: none; border: 0; background: none; padding: 0 0 0 3px; width: 100%; min-width: 0; height: 21px; color: #444; text-overflow: clip; }
.gA { font-size: 14px; font-weight: 600; color: #555; }
.gA.sm { font-size: 12px; }
.tri { align-self: flex-start; margin-top: 4px; }
.aa { font-size: 12px; gap: 5px; font-weight: 600; }
.ch { font-size: 12px; color: #444; }
.ul { text-decoration: underline; text-underline-offset: 2px; }
.strike { text-decoration: line-through; color: #444; }
.lo { font-size: 8px; color: #3f76b5; align-self: flex-end; }
.hi { font-size: 8px; color: #3f76b5; align-self: flex-start; }
.fx { font-size: 15px; font-weight: 600; color: #fff; -webkit-text-stroke: 1px #3f76b5; text-shadow: 0 0 3px #9cc2ea; }
.fc { font-size: 12px; line-height: 14px; }
.fc b { width: 16px; border-bottom: 4px solid #f00; }
.hl { font: 9px "Open Sans", sans-serif; fill: #444; }
.num { font: bold 7px "Open Sans", sans-serif; fill: #3f76b5; }
.srt { font: bold 9px "Open Sans", sans-serif; fill: #3f76b5; }
.srt.z { fill: #8a4fa3; }
.rep { font: 10px "Open Sans", sans-serif; fill: #444; }
.row .on { background: #c5c5c5; }
.gray { color: #777; }

.gallery { display: flex; margin: 2px 7px 0 5px; height: 60px; border: 1px solid #ababab; background: #fff; }
.style { flex: 1 1 0; min-width: 0; flex-direction: column; justify-content: space-between; align-items: stretch; padding: 13px 4px 4px; border: 0 solid #c3c3c3; }
.style.sel { border-width: 2px 4px 4px; padding: 11px 2px 0 3px; }
.smp { font: 13px/17px Lato, sans-serif; color: #000; white-space: nowrap; overflow: hidden; text-align: left; height: 17px; }
.h1s { font-size: 18px; font-weight: 300; color: #2e74b5; }
.h2s { font-size: 15px; font-weight: 300; color: #2e74b5; }
.h3s { font-size: 14px; font-weight: 300; color: #1f4d78; }
.nm { white-space: nowrap; color: #555; line-height: 15px; }
.gscroll { width: 14px; display: flex; flex-direction: column; border-left: 1px solid #c3c3c3; }
.gscroll button { flex: 1; width: 100%; border-bottom: 1px solid #c3c3c3; color: #666; }
.gscroll .off { background: #e6e6e6; }
.g-edit { align-items: flex-start; padding: 0 0 0 7px; gap: 1px; }
.g-edit button { height: 22px; gap: 4px; }
.far { margin-left: 8px; color: #666; }
.near { color: #666; }
.g-adobe { flex-direction: row; align-items: flex-start; padding: 3px 4px 0 10px; }
.g-adobe button { flex-direction: column; flex: 1 1 0; min-width: 0; white-space: nowrap; line-height: 16px; }
.g-adobe svg { height: 28px; margin-bottom: 5px; }
.collapse { margin: auto 10px 4px auto; }

/* Work area */
.work { flex: 1; min-height: 0; display: flex; flex-direction: column; background: #e6e6e6; }
.hrow { display: flex; flex: none; }
.tabstop { width: 22px; height: 22px; background: #fdfdfd; border: 4px solid #d9d9d9; }
.hruler { margin-left: 68px; width: 1190px; }
.rnum { font: 9px "Open Sans", sans-serif; fill: #444; text-anchor: middle; }
.canvas { flex: 1; min-height: 0; display: flex; padding-left: 5px; margin-top: 26px; overflow: hidden; }
.vruler { height: 527px; }
.page { flex: 1; margin: 1px 85px 0 75px; padding: 142px 40px 0 141px; background: #fff; border: 1px solid #c6c6c6; border-bottom: 0; font-family: Lato, sans-serif; font-variant-ligatures: none; color: #000; white-space: nowrap; }
.page h1 { font-size: 28px; line-height: 38px; font-weight: 300; color: #2e74b5; }
.page p { font-size: 20px; line-height: 29px; margin-top: 2px; }
.page u {
  text-decoration: none;
  padding-bottom: 1px;
  background: url("data:image/svg+xml,%3Csvg xmlns='http://www.w3.org/2000/svg' width='4' height='3'%3E%3Cpath d='M0 2.5L2 .5 4 2.5' fill='none' stroke='%23e02020' stroke-width='.9'/%3E%3C/svg%3E") left bottom repeat-x;
}

/* Status bar */
.status { display: flex; align-items: center; height: 20px; flex: none; background: #f1f1f1; border-top: 1px solid #c6c6c6; padding: 0 9px 0 7px; gap: 18px; color: #555; }
.views { display: flex; margin-left: auto; height: 19px; }
.views button { width: 38px; }
.views .on { background: #c9c9c9; }
.zminus { margin: 0 -15px 0 -14px; }
.zplus { margin: 0 -4px 0 -13px; }
.zoom { appearance: none; width: 100px; height: 12px; background: linear-gradient(#999, #999) center / 100% 1px no-repeat; }
.zoom::-webkit-slider-thumb { appearance: none; width: 4px; height: 11px; background: #555; }
.pct { white-space: nowrap; }

/* Dialog window */
.dialog { position: absolute; left: 643px; top: 117px; width: 622px; background: #f0f0f0; border: 1px solid #666; box-shadow: 2px 4px 16px rgba(0, 0, 0, .4); color: #000; }
.dtitle { display: flex; align-items: center; height: 30px; background: #fff; padding: 0 0 1px 8px; }
.dtitle span { margin-right: auto; }
.dtitle button { width: 46px; height: 29px; }
.help { font-size: 13px; font-weight: 600; }
.dbody { padding: 6px 6px 8px; }
h2 { display: flex; align-items: center; gap: 5px; font-size: 11px; line-height: 16px; margin-top: 9px; }
h2.first { margin-top: 0; }
h2::after { content: ""; flex: 1; height: 1px; background: #dcdcdc; }
.fields { display: grid; grid-template-columns: 198px 1fr; gap: 4px 0; align-items: center; margin: 5px 0 0 9px; }
.k { text-decoration: underline; text-underline-offset: 2px; }
.dis { color: #808080; }
.field { height: 20px; border: 1px solid #a0a0a0; background: #fff; min-width: 0; }
.field input { width: 100%; height: 18px; border: 0; outline: 0; padding: 0 2px; background: linear-gradient(#99c9ef, #99c9ef) 2px center / 67px 14px no-repeat; }
.combo { display: grid; grid-template-columns: 1fr 16px; align-items: stretch; }
.combo select { grid-area: 1 / 1; appearance: none; border: 0; background: none; padding: 0 0 0 3px; min-width: 0; width: 100%; height: 18px; text-overflow: clip; opacity: 1; }
.combo.dis { background: #f0f0f0; }
.arr { grid-area: 1 / 2; display: flex; align-items: center; justify-content: center; background: #e3e3e3; border: 1px solid #ababab; border-width: 0 1px 1px 1px; color: #444; }
.dis .arr { background: #d0d0d0; color: #aaa; }
.combo.pil select { padding-left: 24px; }
.p { grid-area: 1 / 1; align-self: center; margin-left: 10px; color: #777; pointer-events: none; }
.fmt { display: flex; align-items: center; margin: 6px 0 0 9px; padding-bottom: 9px; border-bottom: 1px solid #dcdcdc; }
.f-name { width: 138px; }
.f-size { width: 58px; margin-left: 3px; }
.f-col { width: 133px; margin-left: 2px; }
.swatch { grid-area: 1 / 1; margin: 3px; background: #2e74b5; pointer-events: none; }
.dsep { width: 1px; height: 20px; background: #a8a8a8; margin: 0 2px 0 3px; flex: none; }
.para { display: flex; align-items: center; margin: 4px 0 0 9px; height: 21px; color: #777; }
.para button { width: 23px; height: 21px; margin-right: 9px; }
.para .on { background: #bcdcf4; border: 1px solid #90c8f6; }
.para .dsep { margin: 0 9px 0 1px; }
.para .dsep.tight { margin: 0 10px 0 -5px; }
.preview { height: 153px; overflow: hidden; margin: 4px 0 0 9px; padding: 11px 0 0 24px; background: #fff; border: 1px solid #555; white-space: nowrap; }
.prev { font: bold 11px/15px "Liberation Serif", serif; color: #c4c4c4; }
.cur { font: 300 17px/24px Lato, sans-serif; font-variant-ligatures: none; color: #2e74b5; margin-top: 14px; }
.desc { display: flex; margin: 4px 0 0 9px; height: 57px; border: 1px solid #a0a0a0; box-shadow: inset 0 0 0 1px #fff; line-height: 13px; padding: 1px 2px 2px; white-space: nowrap; }
.desc p { flex: 1; min-width: 0; }
.in { padding-left: 12px; }
.sbar { width: 17px; display: flex; flex-direction: column; align-items: center; justify-content: space-between; padding: 6px 0 5px; border-left: 1px solid #fff; }
.thumb { width: 15px; height: 17px; background: #cdcdcd; }
.checks { display: flex; gap: 14px; margin-top: 8px; }
.checks label { display: flex; align-items: center; height: 16px; gap: 4px; }
.radios { margin-top: 3px; gap: 12px; }
.checks input { appearance: none; width: 13px; height: 13px; border: 1px solid #333; background: #fff; display: grid; place-items: center; }
.checks [type=checkbox]:checked::before { content: ""; width: 9px; height: 4px; border: solid #333; border-width: 0 0 1px 1px; transform: translateY(-1px) rotate(-45deg); }
.checks [type=radio] { border-radius: 50%; }
.checks [type=radio]:checked::before { content: ""; width: 7px; height: 7px; border-radius: 50%; background: #222; }
.actions { display: flex; margin: 11px 1px 0; gap: 10px; }
.actions button { width: 74px; height: 22px; background: #e1e1e1; border: 1px solid #adadad; gap: 3px; }
.actions .ok { margin-left: auto; border: 2px solid #1e78c8; }
```
